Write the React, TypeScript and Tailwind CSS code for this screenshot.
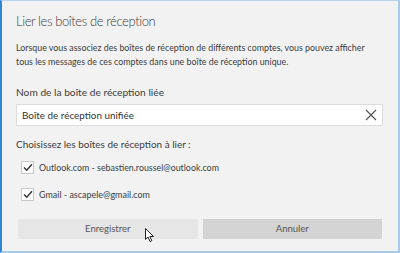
import React from "react";

function Check() {
  return (
    <div className="w-[13px] h-[13px] shrink-0 bg-white border border-[#c8c8c8] flex items-center justify-center">
      <svg width="10" height="9" viewBox="0 0 10 9">
        <path d="M1 4.6 L3.7 7.3 L9 1.3" fill="none" stroke="#333" strokeWidth="1.4" />
      </svg>
    </div>
  );
}

export default function App() {
  return (
    <div
      className="relative w-[400px] h-[253px] bg-[#f2f2f2] border-l-2 border-l-[#2b86d6] border-t border-t-[#b7d2ec] border-r-2 border-r-[#a9cbea] border-b-2 border-b-[#a9cbea] overflow-hidden text-[#333]"
      style={{ fontFamily: 'Lato, "Noto Sans", sans-serif' }}
    >
      <div className="pl-[14px] pr-[15px] flex flex-col">
        <div className="h-[30px] pt-[11px] text-[13px] leading-[18px] tracking-[-0.4px] font-light text-[#3c3c3c] whitespace-nowrap">Lier les boîtes de réception</div>
        <div className="mt-[10px] h-[28px] text-[8.85px] leading-[14px] text-[#3c3c3c] whitespace-nowrap">
          Lorsque vous associez des boîtes de réception de différents comptes, vous pouvez afficher
          <br />
          tous les messages de ces comptes dans une boîte de réception unique.
        </div>
        <div className="mt-[16px] h-[14px] text-[10.2px] leading-[14px] text-[#3c3c3c] whitespace-nowrap">Nom de la boîte de réception liée</div>
        <div className="mt-[5px] h-[22px] bg-white border border-[#dcdcdc] flex items-center justify-between pl-[5px] pr-[5px]">
          <span className="text-[9.9px] text-[#333]">Boîte de réception unifiée</span>
          <svg width="12" height="12" viewBox="0 0 12 12">
            <path d="M1 1 L11 11 M11 1 L1 11" stroke="#555" strokeWidth="1.2" />
          </svg>
        </div>
        <div className="mt-[11px] h-[14px] text-[9.95px] leading-[14px] text-[#3c3c3c] whitespace-nowrap">Choisissez les boîtes de réception à lier :</div>
        <div className="mt-[10px] pl-[5px] flex flex-col gap-[14px]">
          <div className="flex items-center gap-[5px] h-[13px]">
            <Check />
            <span className="text-[8.85px] text-[#3c3c3c] whitespace-nowrap">Outlook.com - sebastien.roussel@outlook.com</span>
          </div>
          <div className="flex items-center gap-[5px] h-[13px]">
            <Check />
            <span className="text-[8.95px] text-[#3c3c3c] whitespace-nowrap">Gmail - ascapele@gmail.com</span>
          </div>
        </div>
        <div className="mt-[18px] flex gap-[5px] pl-[2px] pr-[1px]">
          <div className="flex-1 h-[20px] bg-[#e6e6e6] flex items-center justify-center text-[9.5px] text-[#555]">Enregistrer</div>
          <div className="flex-1 h-[20px] bg-[#d4d4d4] flex items-center justify-center text-[9.5px] text-[#555]">Annuler</div>
        </div>
      </div>
      <svg className="absolute left-[143px] top-[227px]" width="10" height="15" viewBox="0 0 10 15">
        <path d="M0.5 0.5 L0.5 11.5 L3 9 L5 13.5 L6.8 12.7 L4.9 8.5 L8.5 8.5 Z" fill="white" stroke="#222" strokeWidth="1" strokeLinejoin="round" />
      </svg>
    </div>
  );
}
